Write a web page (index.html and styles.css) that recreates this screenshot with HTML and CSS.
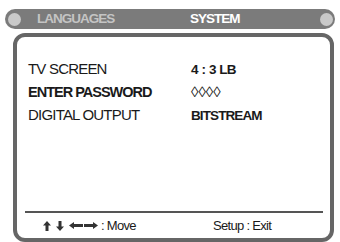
FILE: index.html
```html
<!DOCTYPE html>
<html>
<head>
<meta charset="utf-8">
<link rel="stylesheet" href="styles.css">
</head>
<body>
<div class="screen">
  <div class="tabbar">
    <span class="dot"></span>
    <span class="tab tab-off">LANGUAGES</span>
    <span class="tab tab-on">SYSTEM</span>
    <span class="dot"></span>
  </div>
  <div class="panel">
    <div class="rows">
      <div class="row"><span class="label">TV SCREEN</span><span class="value">4 : 3 LB</span></div>
      <div class="row active"><span class="label">ENTER PASSWORD</span><span class="value mask">◊◊◊◊</span></div>
      <div class="row"><span class="label">DIGITAL OUTPUT</span><span class="value">BITSTREAM</span></div>
    </div>
    <div class="sep"></div>
    <div class="footer">
      <span class="keys">
        <svg class="arr-v" width="8" height="10" viewBox="0 0 8 10"><path d="M4 0 L8 4.5 H5.5 V10 H2.5 V4.5 H0 Z"/></svg>
        <svg class="arr-v" width="8" height="10" viewBox="0 0 8 10"><path d="M4 10 L8 5.5 H5.5 V0 H2.5 V5.5 H0 Z"/></svg>
        <svg class="arr-h" width="14" height="7" viewBox="0 0 14 7"><path d="M0 3.5 L5 0 V2 H14 V5 H5 V7 Z"/></svg>
        <svg class="arr-h" width="14" height="7" viewBox="0 0 14 7"><path d="M14 3.5 L9 0 V2 H0 V5 H9 V7 Z"/></svg>
        <span class="keytext">: Move</span>
      </span>
      <span class="exit">Setup : Exit</span>
    </div>
  </div>
</div>
</body>
</html>
```
FILE: styles.css
```css
html, body {
  margin: 0;
  padding: 0;
  background: #ffffff;
}
.screen {
  width: 340px;
  height: 242px;
  overflow: hidden;
  font-family: "Liberation Sans", Arial, sans-serif;
  color: #1a1a1a;
}
.tabbar {
  margin: 9px 5px 0 5px;
  height: 20px;
  border-radius: 10px;
  background: #7b7b7b;
  display: flex;
  align-items: center;
  padding: 0 2px 0 3px;
}
.dot {
  width: 13px;
  height: 13px;
  border-radius: 50%;
  background: #c9c9c9;
  flex: none;
}
.tab {
  font-weight: bold;
  font-size: 13.5px;
  letter-spacing: -1px;
  line-height: 20px;
}
.tab-off {
  color: #c4c4c4;
  margin-left: 16px;
  width: 153px;
}
.tab-on {
  color: #ffffff;
  flex: 1;
}
.panel {
  margin: 4px 0 0 13px;
  width: 321px;
  height: 209px;
  box-sizing: border-box;
  border: 4px solid #666666;
  border-radius: 12px;
  display: flex;
  flex-direction: column;
}
.rows {
  padding: 20px 0 0 11px;
  flex: 1;
}
.row {
  display: flex;
  align-items: baseline;
  height: 23px;
  line-height: 23px;
}
.label {
  width: 163px;
  font-size: 15px;
  letter-spacing: -0.8px;
  flex: none;
}
.active .label {
  font-weight: bold;
  font-size: 14.5px;
  letter-spacing: -1px;
}
.value {
  font-size: 13.5px;
  font-weight: bold;
  letter-spacing: -0.9px;
  word-spacing: 1px;
}
.mask {
  font-weight: normal;
  font-size: 15px;
  letter-spacing: 0;
}
.sep {
  height: 2px;
  background: #555555;
  margin: 0 7px 0 8px;
}
.footer {
  height: 25px;
  display: flex;
  align-items: center;
  font-size: 13px;
  letter-spacing: -0.7px;
  padding-left: 26px;
}
.keys {
  display: flex;
  align-items: center;
  width: 170px;
  flex: none;
}
.keys svg {
  fill: #333333;
  display: block;
}
.arr-v {
  margin-right: 5px;
}
.arr-h {
  margin-right: 1px;
}
.keytext {
  margin-left: 2px;
}
```
